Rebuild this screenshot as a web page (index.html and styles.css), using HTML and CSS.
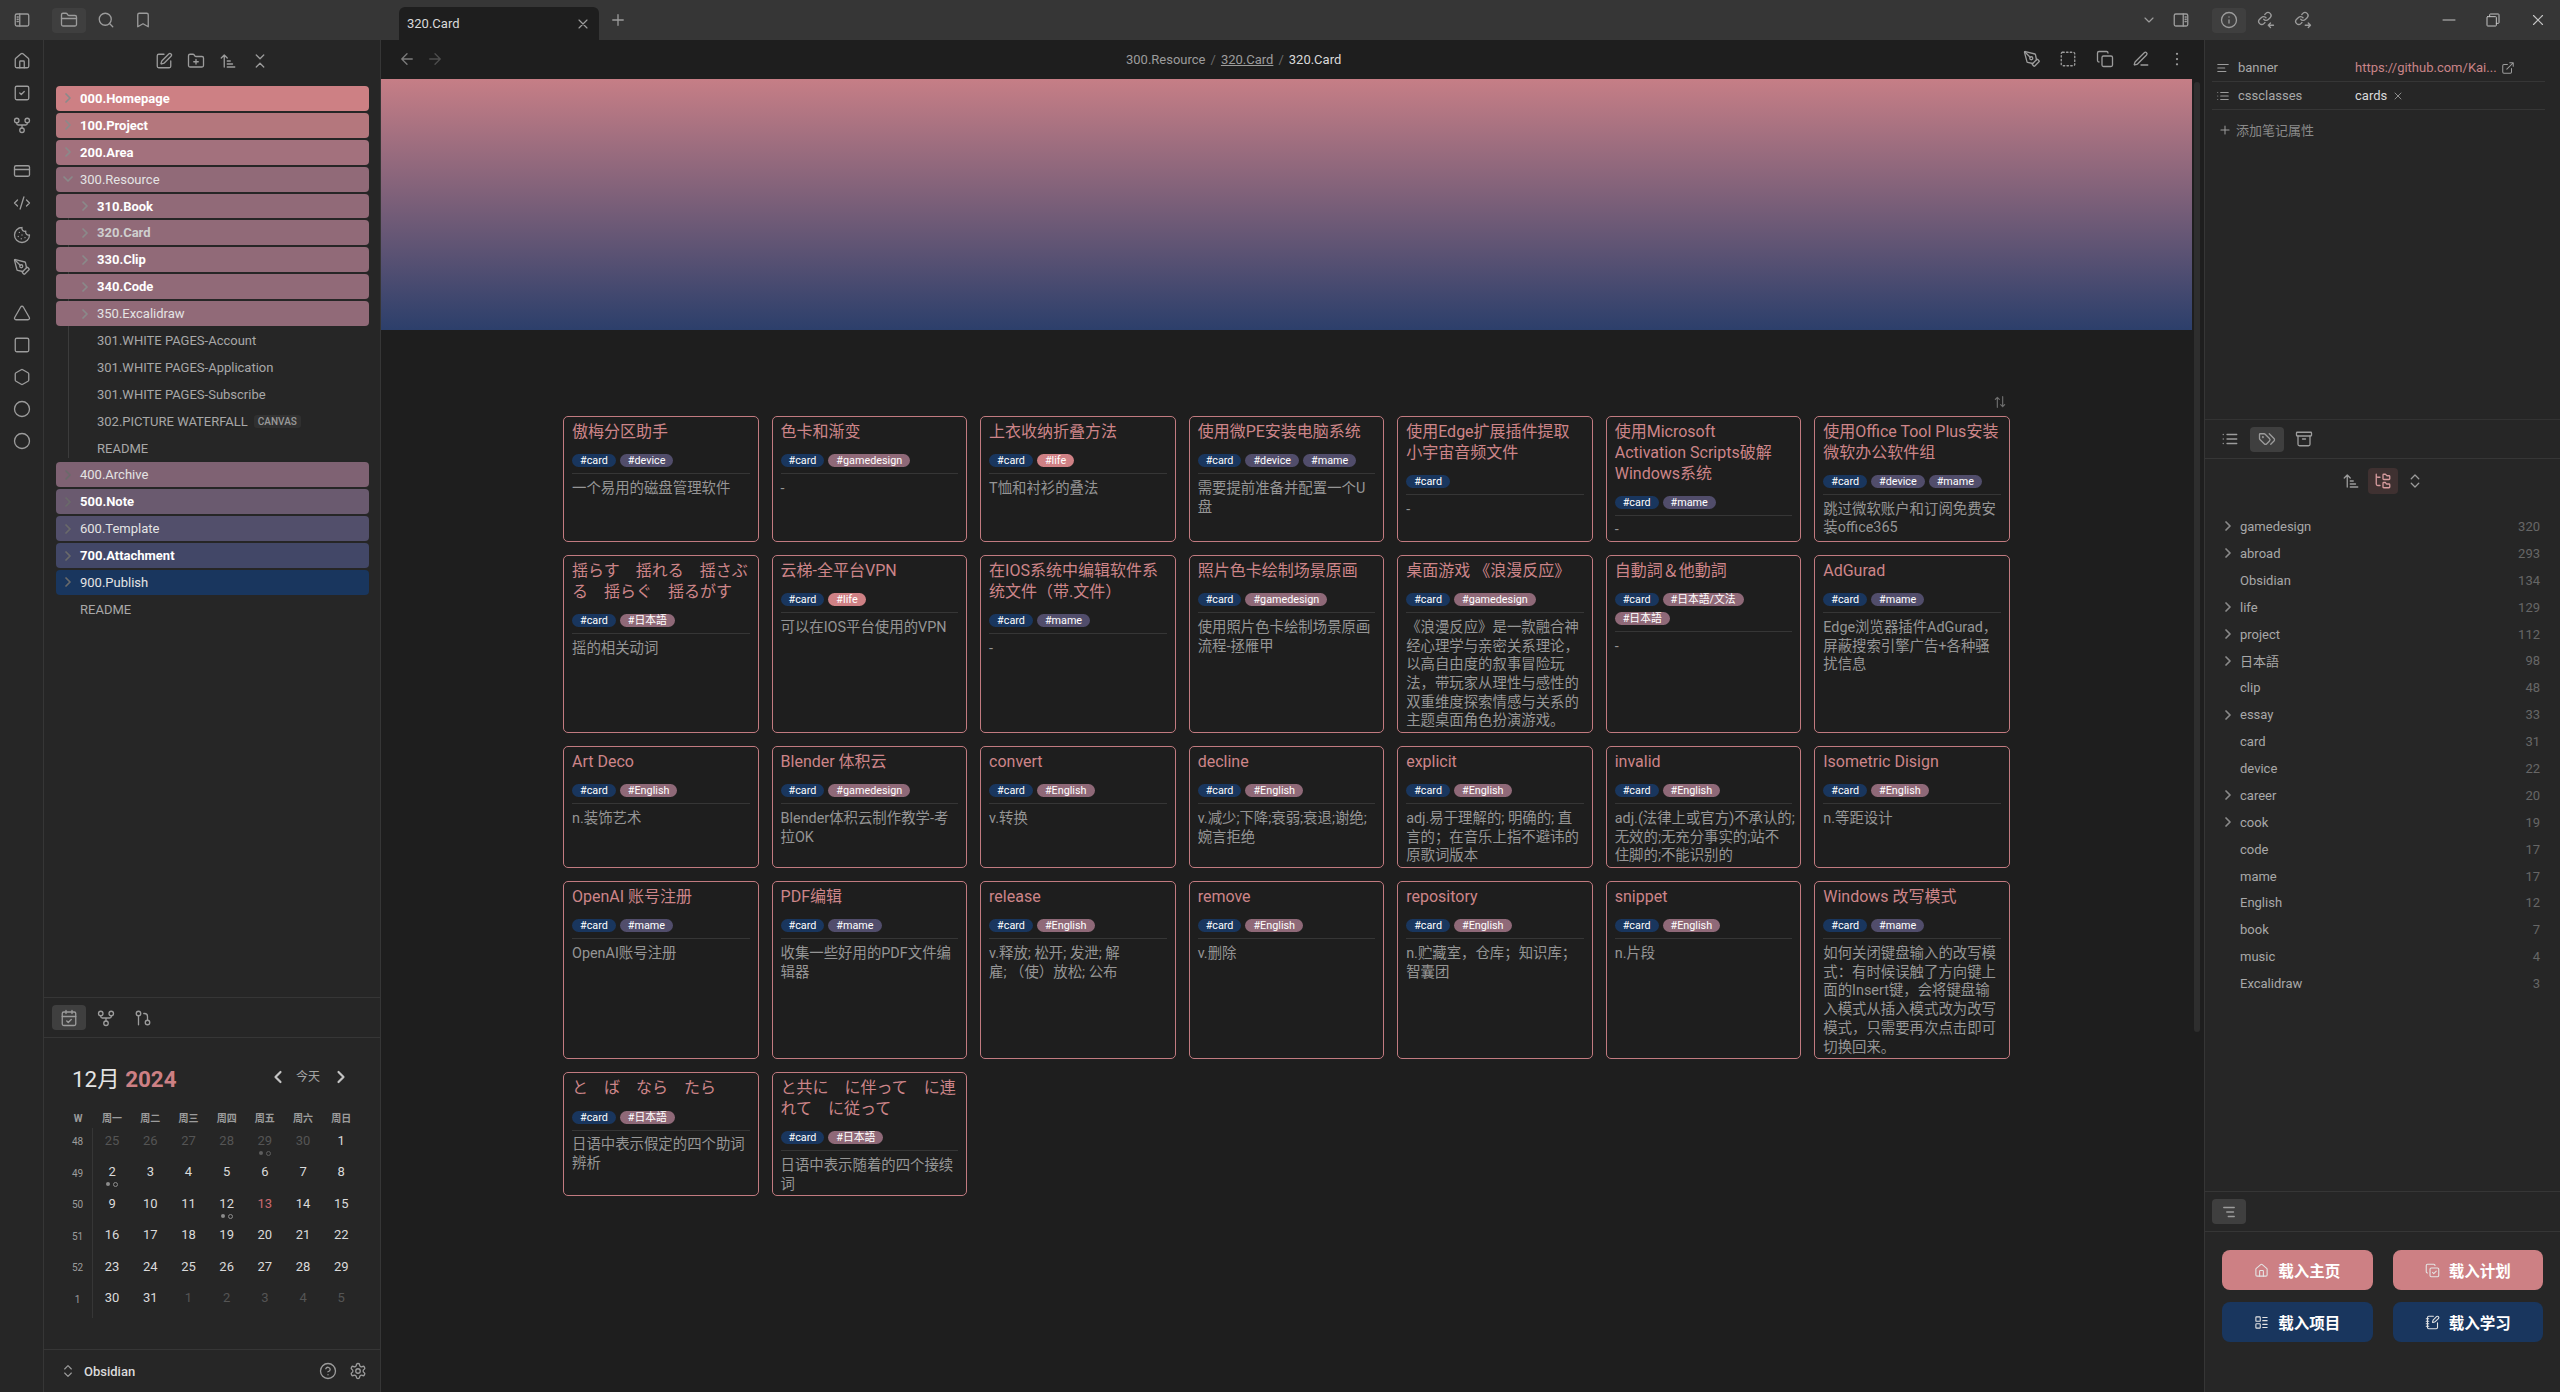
FILE: index.html
```html
<!DOCTYPE html>
<html lang="zh-CN">
  <head>
    <meta charset="UTF-8" />
    <title>320.Card - Obsidian</title>
    <link rel="stylesheet" href="styles.css">
  </head>
  <body>
    <svg class="defs" aria-hidden="true">
      <symbol id="i-sidebar-left" viewBox="0 0 24 24"><rect x="3" y="4" width="18" height="16" rx="2"/><path d="M9 4v16M5.5 8h1.5M5.5 11h1.5M5.5 14h1.5"/></symbol>
      <symbol id="i-sidebar-right" viewBox="0 0 24 24"><rect x="3" y="4" width="18" height="16" rx="2"/><path d="M15 4v16M17.5 8H19M17.5 11H19M17.5 14H19"/></symbol>
      <symbol id="i-folder" viewBox="0 0 24 24"><path d="M20 20a2 2 0 0 0 2-2V8a2 2 0 0 0-2-2h-7.9a2 2 0 0 1-1.69-.9L9.6 3.9A2 2 0 0 0 7.93 3H4a2 2 0 0 0-2 2v13a2 2 0 0 0 2 2Z"/><path d="M2 10h20"/></symbol>
      <symbol id="i-search" viewBox="0 0 24 24"><circle cx="11" cy="11" r="8"/><path d="m21 21-4.3-4.3"/></symbol>
      <symbol id="i-bookmark" viewBox="0 0 24 24"><path d="m19 21-7-4-7 4V5a2 2 0 0 1 2-2h10a2 2 0 0 1 2 2v16z"/></symbol>
      <symbol id="i-home" viewBox="0 0 24 24"><path d="M15 21v-8a1 1 0 0 0-1-1h-4a1 1 0 0 0-1 1v8"/><path d="M3 10a2 2 0 0 1 .709-1.528l7-5.999a2 2 0 0 1 2.582 0l7 5.999A2 2 0 0 1 21 10v9a2 2 0 0 1-2 2H5a2 2 0 0 1-2-2z"/></symbol>
      <symbol id="i-check-square" viewBox="0 0 24 24"><rect x="3" y="3" width="18" height="18" rx="2"/><path d="m9 12 2 2 4-4"/></symbol>
      <symbol id="i-fork" viewBox="0 0 24 24"><circle cx="12" cy="19" r="3"/><circle cx="5" cy="6" r="3"/><circle cx="19" cy="6" r="3"/><path d="M19 9v1c0 1-.6 2-2 2H7c-1.400 0-2-1-2-2V9M12 12v4"/></symbol>
      <symbol id="i-card" viewBox="0 0 24 24"><rect x="2" y="5" width="20" height="14" rx="2"/><path d="M2 10h20"/></symbol>
      <symbol id="i-code" viewBox="0 0 24 24"><path d="m18 16 4-4-4-4M6 8l-4 4 4 4M14.500 4l-5 16"/></symbol>
      <symbol id="i-cookie" viewBox="0 0 24 24"><path d="M12 2a10 10 0 1 0 10 10 4 4 0 0 1-5-5 4 4 0 0 1-5-5"/><path d="M8.500 8.500h.01M16 15.500h.01M12 12h.01M11 17h.01M7 14h.01"/></symbol>
      <symbol id="i-pen" viewBox="0 0 24 24"><path d="M15.707 21.293a1 1 0 0 1-1.414 0l-1.586-1.586a1 1 0 0 1 0-1.414l5.586-5.586a1 1 0 0 1 1.414 0l1.586 1.586a1 1 0 0 1 0 1.414z"/><path d="m18 13-1.375-6.874a1 1 0 0 0-.746-.776L3.235 2.028a1 1 0 0 0-1.207 1.207L5.350 15.879a1 1 0 0 0 .776.746L13 18"/><path d="m2.300 2.300 7.286 7.286"/><circle cx="11" cy="11" r="2"/></symbol>
      <symbol id="i-triangle" viewBox="0 0 24 24"><path d="m21.730 18-8-14a2 2 0 0 0-3.480 0l-8 14A2 2 0 0 0 4 21h16a2 2 0 0 0 1.730-3"/></symbol>
      <symbol id="i-square" viewBox="0 0 24 24"><rect x="3" y="3" width="18" height="18" rx="2"/></symbol>
      <symbol id="i-hexagon" viewBox="0 0 24 24"><path d="M21 16V8a2 2 0 0 0-1-1.730l-7-4a2 2 0 0 0-2 0l-7 4A2 2 0 0 0 3 8v8a2 2 0 0 0 1 1.730l7 4a2 2 0 0 0 2 0l7-4A2 2 0 0 0 21 16z"/></symbol>
      <symbol id="i-circle" viewBox="0 0 24 24"><circle cx="12" cy="12" r="10"/></symbol>
      <symbol id="i-edit" viewBox="0 0 24 24"><path d="M12 3H5a2 2 0 0 0-2 2v14a2 2 0 0 0 2 2h14a2 2 0 0 0 2-2v-7"/><path d="M18.375 2.625a1 1 0 0 1 3 3l-9.013 9.014a2 2 0 0 1-.853.505l-2.873.84a.5.5 0 0 1-.62-.62l.84-2.873a2 2 0 0 1 .506-.852z"/></symbol>
      <symbol id="i-folder-plus" viewBox="0 0 24 24"><path d="M12 10v6M9 13h6"/><path d="M20 20a2 2 0 0 0 2-2V8a2 2 0 0 0-2-2h-7.900a2 2 0 0 1-1.690-.9L9.600 3.900A2 2 0 0 0 7.930 3H4a2 2 0 0 0-2 2v13a2 2 0 0 0 2 2Z"/></symbol>
      <symbol id="i-sort" viewBox="0 0 24 24"><path d="m3 8 4-4 4 4M7 4v16M11 12h4M11 16h7M11 20h10"/></symbol>
      <symbol id="i-collapse" viewBox="0 0 24 24"><path d="m7 20 5-5 5 5M7 4l5 5 5-5"/></symbol>
      <symbol id="i-expand" viewBox="0 0 24 24"><path d="m7 15 5 5 5-5M7 9l5-5 5 5"/></symbol>
      <symbol id="i-calendar" viewBox="0 0 24 24"><path d="M8 2v4M16 2v4"/><rect x="3" y="4" width="18" height="18" rx="2"/><path d="M3 10h18M9 16l2 2 4-4"/></symbol>
      <symbol id="i-pull" viewBox="0 0 24 24"><circle cx="18" cy="18" r="3"/><circle cx="6" cy="6" r="3"/><path d="M13 6h1a4 4 0 0 1 4 4v5M6 9v12"/></symbol>
      <symbol id="i-help" viewBox="0 0 24 24"><circle cx="12" cy="12" r="10"/><path d="M9.090 9a3 3 0 0 1 5.830 1c0 2-3 3-3 3M12 17h.01"/></symbol>
      <symbol id="i-gear" viewBox="0 0 24 24"><path d="M12.220 2h-.44a2 2 0 0 0-2 2v.18a2 2 0 0 1-1 1.730l-.43.25a2 2 0 0 1-2 0l-.15-.08a2 2 0 0 0-2.730.73l-.22.38a2 2 0 0 0 .73 2.730l.15.1a2 2 0 0 1 1 1.720v.51a2 2 0 0 1-1 1.740l-.15.09a2 2 0 0 0-.73 2.730l.22.38a2 2 0 0 0 2.730.73l.15-.08a2 2 0 0 1 2 0l.43.25a2 2 0 0 1 1 1.730V20a2 2 0 0 0 2 2h.44a2 2 0 0 0 2-2v-.18a2 2 0 0 1 1-1.730l.43-.25a2 2 0 0 1 2 0l.15.08a2 2 0 0 0 2.730-.73l.22-.39a2 2 0 0 0-.73-2.730l-.15-.08a2 2 0 0 1-1-1.740v-.5a2 2 0 0 1 1-1.740l.15-.09a2 2 0 0 0 .73-2.730l-.22-.38a2 2 0 0 0-2.730-.73l-.15.08a2 2 0 0 1-2 0l-.43-.25a2 2 0 0 1-1-1.730V4a2 2 0 0 0-2-2z"/><circle cx="12" cy="12" r="3"/></symbol>
      <symbol id="i-x" viewBox="0 0 24 24"><path d="M18 6 6 18M6 6l12 12"/></symbol>
      <symbol id="i-plus" viewBox="0 0 24 24"><path d="M5 12h14M12 5v14"/></symbol>
      <symbol id="i-arrow-left" viewBox="0 0 24 24"><path d="m12 19-7-7 7-7M19 12H5"/></symbol>
      <symbol id="i-arrow-right" viewBox="0 0 24 24"><path d="m12 5 7 7-7 7M5 12h14"/></symbol>
      <symbol id="i-chevron-down" viewBox="0 0 24 24"><path d="m6 9 6 6 6-6"/></symbol>
      <symbol id="i-chevron-right" viewBox="0 0 24 24"><path d="m9 18 6-6-6-6"/></symbol>
      <symbol id="i-chevron-left" viewBox="0 0 24 24"><path d="m15 18-6-6 6-6"/></symbol>
      <symbol id="i-dashed" viewBox="0 0 24 24"><rect x="3" y="3" width="18" height="18" rx="2" stroke-dasharray="2 3"/></symbol>
      <symbol id="i-copy" viewBox="0 0 24 24"><rect x="8" y="8" width="14" height="14" rx="2"/><path d="M4 16c-1.100 0-2-.9-2-2V4c0-1.100.9-2 2-2h10c1.100 0 2 .9 2 2"/></symbol>
      <symbol id="i-pencil" viewBox="0 0 24 24"><path d="M12 20h9"/><path d="M16.376 3.622a1 1 0 0 1 3.002 3.002L7.368 18.635a2 2 0 0 1-.855.506l-2.872.838a.5.5 0 0 1-.62-.62l.838-2.872a2 2 0 0 1 .506-.854z"/></symbol>
      <symbol id="i-more" viewBox="0 0 24 24"><path d="M12 5h.01M12 12h.01M12 19h.01" stroke-width="3"/></symbol>
      <symbol id="i-info" viewBox="0 0 24 24"><circle cx="12" cy="12" r="10"/><path d="M12 16v-4M12 8h.01"/></symbol>
      <symbol id="i-link-in" viewBox="0 0 24 24"><path d="M9 11a4 4 0 0 0 6 .4l2.500-2.500a4 4 0 0 0-5.700-5.700l-1.400 1.400"/><path d="M12 9a4 4 0 0 0-6-.4l-2.500 2.500a4 4 0 0 0 5.700 5.700l1.400-1.400"/><path d="M22 19h-7M18 16l-3 3 3 3"/></symbol>
      <symbol id="i-link-out" viewBox="0 0 24 24"><path d="M9 11a4 4 0 0 0 6 .4l2.500-2.500a4 4 0 0 0-5.700-5.700l-1.400 1.400"/><path d="M12 9a4 4 0 0 0-6-.4l-2.500 2.500a4 4 0 0 0 5.700 5.700l1.400-1.400"/><path d="M15 19h7M19 16l3 3-3 3"/></symbol>
      <symbol id="i-minimize" viewBox="0 0 24 24"><path d="M3 12h18"/></symbol>
      <symbol id="i-restore" viewBox="0 0 24 24"><rect x="3" y="7" width="14" height="14" rx="1"/><path d="M7 7V4a1 1 0 0 1 1-1h12a1 1 0 0 1 1 1v12a1 1 0 0 1-1 1h-3"/></symbol>
      <symbol id="i-text" viewBox="0 0 24 24"><path d="M21 6H3M15 12H3M17 18H3"/></symbol>
      <symbol id="i-list" viewBox="0 0 24 24"><path d="M3 6h.01M3 12h.01M3 18h.01M8 6h13M8 12h13M8 18h13"/></symbol>
      <symbol id="i-external" viewBox="0 0 24 24"><path d="M15 3h6v6M10 14 21 3"/><path d="M18 13v6a2 2 0 0 1-2 2H5a2 2 0 0 1-2-2V8a2 2 0 0 1 2-2h6"/></symbol>
      <symbol id="i-tags" viewBox="0 0 24 24"><path d="m15 5 6.300 6.300a2.400 2.400 0 0 1 0 3.400L17 19"/><path d="M9.586 5.586A2 2 0 0 0 8.172 5H3a1 1 0 0 0-1 1v5.172a2 2 0 0 0 .586 1.414L8.290 18.290a2.426 2.426 0 0 0 3.420 0l3.580-3.580a2.426 2.426 0 0 0 0-3.420z"/><circle cx="6.500" cy="9.500" r=".5"/></symbol>
      <symbol id="i-archive" viewBox="0 0 24 24"><rect x="2" y="3" width="20" height="5" rx="1"/><path d="M4 8v11a2 2 0 0 0 2 2h12a2 2 0 0 0 2-2V8M10 12h4"/></symbol>
      <symbol id="i-tree" viewBox="0 0 24 24"><path d="M20 10a1 1 0 0 0 1-1V6a1 1 0 0 0-1-1h-2.500a1 1 0 0 1-.8-.4l-.9-1.200A1 1 0 0 0 15 3h-2a1 1 0 0 0-1 1v5a1 1 0 0 0 1 1Z"/><path d="M20 21a1 1 0 0 0 1-1v-3a1 1 0 0 0-1-1h-2.900a1 1 0 0 1-.88-.55l-.42-.85a1 1 0 0 0-.92-.6H13a1 1 0 0 0-1 1v5a1 1 0 0 0 1 1Z"/><path d="M3 5a2 2 0 0 0 2 2h3M3 3v13a2 2 0 0 0 2 2h3"/></symbol>
      <symbol id="i-outline" viewBox="0 0 24 24"><path d="M5 6h14M9 12h9M11 18h8"/></symbol>
      <symbol id="i-copy-check" viewBox="0 0 24 24"><path d="m12 15 2 2 4-4"/><rect x="8" y="8" width="14" height="14" rx="2"/><path d="M4 16c-1.100 0-2-.9-2-2V4c0-1.100.9-2 2-2h10c1.100 0 2 .9 2 2"/></symbol>
      <symbol id="i-layout-list" viewBox="0 0 24 24"><rect x="3" y="3" width="7" height="7" rx="1"/><rect x="3" y="14" width="7" height="7" rx="1"/><path d="M14 4h7M14 9h7M14 15h7M14 20h7"/></symbol>
      <symbol id="i-notebook" viewBox="0 0 24 24"><path d="M13.400 2H6a2 2 0 0 0-2 2v16a2 2 0 0 0 2 2h12a2 2 0 0 0 2-2v-7.400"/><path d="M2 6h4M2 10h4M2 14h4M2 18h4"/><path d="M21.378 5.626a1 1 0 1 0-3.004-3.004l-5.010 5.012a2 2 0 0 0-.506.854l-.837 2.870a.5.5 0 0 0 .62.62l2.870-.837a2 2 0 0 0 .854-.506z"/></symbol>
    </svg>

    <div id="app">
      <div class="title-bar">
        <div class="tb-left">
          <div class="ribbon-toggle"><svg class="ico"><use href="#i-sidebar-left"/></svg></div>
          <div class="tab-group">
            <div class="tab-btn active"><svg class="ico"><use href="#i-folder"/></svg></div>
            <div class="tab-btn"><svg class="ico"><use href="#i-search"/></svg></div>
            <div class="tab-btn"><svg class="ico"><use href="#i-bookmark"/></svg></div>
          </div>
        </div>
        <div class="tb-center">
          <div class="doc-tab">
            <span>320.Card</span>
            <svg class="ico small"><use href="#i-x"/></svg>
          </div>
          <svg class="ico new-tab"><use href="#i-plus"/></svg>
          <div class="tb-tools">
            <svg class="ico small"><use href="#i-chevron-down"/></svg>
            <svg class="ico"><use href="#i-sidebar-right"/></svg>
          </div>
        </div>
        <div class="tb-right">
          <div class="tab-group">
            <div class="tab-btn active"><svg class="ico"><use href="#i-info"/></svg></div>
            <div class="tab-btn"><svg class="ico"><use href="#i-link-in"/></svg></div>
            <div class="tab-btn"><svg class="ico"><use href="#i-link-out"/></svg></div>
          </div>
          <div class="win-ctrls">
            <svg class="ico small"><use href="#i-minimize"/></svg>
            <svg class="ico small"><use href="#i-restore"/></svg>
            <svg class="ico"><use href="#i-x"/></svg>
          </div>
        </div>
      </div>

      <div class="workspace">
        <div class="ribbon">
          <svg class="ico"><use href="#i-home"/></svg>
          <svg class="ico"><use href="#i-check-square"/></svg>
          <svg class="ico"><use href="#i-fork"/></svg>
          <svg class="ico group-start"><use href="#i-card"/></svg>
          <svg class="ico"><use href="#i-code"/></svg>
          <svg class="ico"><use href="#i-cookie"/></svg>
          <svg class="ico"><use href="#i-pen"/></svg>
          <svg class="ico group-start"><use href="#i-triangle"/></svg>
          <svg class="ico"><use href="#i-square"/></svg>
          <svg class="ico"><use href="#i-hexagon"/></svg>
          <svg class="ico"><use href="#i-circle"/></svg>
          <svg class="ico"><use href="#i-circle"/></svg>
        </div>

        <div class="side-left">
          <div class="file-pane">
            <div class="pane-nav">
              <svg class="ico"><use href="#i-edit"/></svg>
              <svg class="ico"><use href="#i-folder-plus"/></svg>
              <svg class="ico"><use href="#i-sort"/></svg>
              <svg class="ico"><use href="#i-collapse"/></svg>
            </div>
            <div class="tree">
              <div class="row c0 strong"><svg class="chev"><use href="#i-chevron-right"/></svg>000.Homepage</div>
              <div class="row c1 strong"><svg class="chev"><use href="#i-chevron-right"/></svg>100.Project</div>
              <div class="row c2 strong"><svg class="chev"><use href="#i-chevron-right"/></svg>200.Area</div>
              <div class="row c3"><svg class="chev"><use href="#i-chevron-down"/></svg>300.Resource</div>
              <div class="children">
                <div class="row c3 strong"><svg class="chev"><use href="#i-chevron-right"/></svg>310.Book</div>
                <div class="row c3 strong current"><svg class="chev"><use href="#i-chevron-right"/></svg>320.Card</div>
                <div class="row c3 strong"><svg class="chev"><use href="#i-chevron-right"/></svg>330.Clip</div>
                <div class="row c3 strong"><svg class="chev"><use href="#i-chevron-right"/></svg>340.Code</div>
                <div class="row c3"><svg class="chev"><use href="#i-chevron-right"/></svg>350.Excalidraw</div>
                <div class="row file">301.WHITE PAGES-Account</div>
                <div class="row file">301.WHITE PAGES-Application</div>
                <div class="row file">301.WHITE PAGES-Subscribe</div>
                <div class="row file">302.PICTURE WATERFALL<span class="badge">CANVAS</span></div>
                <div class="row file">README</div>
              </div>
              <div class="row c4"><svg class="chev"><use href="#i-chevron-right"/></svg>400.Archive</div>
              <div class="row c5 strong"><svg class="chev"><use href="#i-chevron-right"/></svg>500.Note</div>
              <div class="row c6"><svg class="chev"><use href="#i-chevron-right"/></svg>600.Template</div>
              <div class="row c7 strong"><svg class="chev"><use href="#i-chevron-right"/></svg>700.Attachment</div>
              <div class="row c8"><svg class="chev"><use href="#i-chevron-right"/></svg>900.Publish</div>
              <div class="row file top">README</div>
            </div>
          </div>

          <div class="cal-tabs">
            <div class="tab-group">
              <div class="tab-btn active"><svg class="ico"><use href="#i-calendar"/></svg></div>
              <div class="tab-btn"><svg class="ico"><use href="#i-fork"/></svg></div>
              <div class="tab-btn"><svg class="ico"><use href="#i-pull"/></svg></div>
            </div>
          </div>

          <div class="calendar">
            <div class="cal-head">
              <div class="cal-title">12月 <b>2024</b></div>
              <div class="cal-nav">
                <svg class="ico"><use href="#i-chevron-left"/></svg>
                <span>今天</span>
                <svg class="ico"><use href="#i-chevron-right"/></svg>
              </div>
            </div>
            <div class="cal-grid">
              <div class="hd">W</div><div class="hd">周一</div><div class="hd">周二</div><div class="hd">周三</div><div class="hd">周四</div><div class="hd">周五</div><div class="hd">周六</div><div class="hd">周日</div>
              <div class="wk">48</div><div class="day out">25</div><div class="day out">26</div><div class="day out">27</div><div class="day out">28</div><div class="day out">29<i class="dots"><i></i><i></i></i></div><div class="day out">30</div><div class="day">1</div>
              <div class="wk">49</div><div class="day">2<i class="dots"><i></i><i></i></i></div><div class="day">3</div><div class="day">4</div><div class="day">5</div><div class="day">6</div><div class="day">7</div><div class="day">8</div>
              <div class="wk">50</div><div class="day">9</div><div class="day">10</div><div class="day">11</div><div class="day">12<i class="dots"><i></i><i></i></i></div><div class="day today">13</div><div class="day">14</div><div class="day">15</div>
              <div class="wk">51</div><div class="day">16</div><div class="day">17</div><div class="day">18</div><div class="day">19</div><div class="day">20</div><div class="day">21</div><div class="day">22</div>
              <div class="wk">52</div><div class="day">23</div><div class="day">24</div><div class="day">25</div><div class="day">26</div><div class="day">27</div><div class="day">28</div><div class="day">29</div>
              <div class="wk">1</div><div class="day">30</div><div class="day">31</div><div class="day out">1</div><div class="day out">2</div><div class="day out">3</div><div class="day out">4</div><div class="day out">5</div>
            </div>
          </div>

          <div class="vault">
            <svg class="ico small"><use href="#i-expand"/></svg>
            <span class="vault-name">Obsidian</span>
            <svg class="ico"><use href="#i-help"/></svg>
            <svg class="ico"><use href="#i-gear"/></svg>
          </div>
        </div>

        <div class="main">
          <div class="nav-bar">
            <div class="nav-arrows">
              <svg class="ico"><use href="#i-arrow-left"/></svg>
              <svg class="ico dim"><use href="#i-arrow-right"/></svg>
            </div>
            <div class="crumbs">300.Resource<i>/</i><u>320.Card</u><i>/</i><b>320.Card</b></div>
            <div class="nav-actions">
              <svg class="ico"><use href="#i-pen"/></svg>
              <svg class="ico"><use href="#i-dashed"/></svg>
              <svg class="ico"><use href="#i-copy"/></svg>
              <svg class="ico"><use href="#i-pencil"/></svg>
              <svg class="ico"><use href="#i-more"/></svg>
            </div>
          </div>

          <div class="note">
            <div class="banner"></div>
            <div class="note-body">
              <div class="sort-row"><svg class="ico sort" viewBox="0 0 24 24"><path d="M8 20V5M5 8l3-3 3 3M16 4v15M13 16l3 3 3-3"/></svg></div>
              <div class="cards">
                <div class="card"><h4>傲梅分区助手</h4><div class="tags"><span class="t-card">#card</span><span class="t-device">#device</span></div><p>一个易用的磁盘管理软件</p></div>
                <div class="card"><h4>色卡和渐变</h4><div class="tags"><span class="t-card">#card</span><span class="t-game">#gamedesign</span></div><p>-</p></div>
                <div class="card"><h4>上衣收纳折叠方法</h4><div class="tags"><span class="t-card">#card</span><span class="t-life">#life</span></div><p>T恤和衬衫的叠法</p></div>
                <div class="card"><h4>使用微PE安装电脑系统</h4><div class="tags"><span class="t-card">#card</span><span class="t-device">#device</span><span class="t-device">#mame</span></div><p>需要提前准备并配置一个U盘</p></div>
                <div class="card"><h4>使用Edge扩展插件提取小宇宙音频文件</h4><div class="tags"><span class="t-card">#card</span></div><p>-</p></div>
                <div class="card"><h4>使用Microsoft<br>Activation Scripts破解<br>Windows系统</h4><div class="tags"><span class="t-card">#card</span><span class="t-device">#mame</span></div><p>-</p></div>
                <div class="card"><h4>使用Office Tool Plus安装微软办公软件组</h4><div class="tags"><span class="t-card">#card</span><span class="t-device">#device</span><span class="t-device">#mame</span></div><p>跳过微软账户和订阅免费安装office365</p></div>

                <div class="card"><h4>揺らす　揺れる　揺さぶる　揺らぐ　揺るがす</h4><div class="tags"><span class="t-card">#card</span><span class="t-game">#日本語</span></div><p>摇的相关动词</p></div>
                <div class="card"><h4>云梯-全平台VPN</h4><div class="tags"><span class="t-card">#card</span><span class="t-life">#life</span></div><p>可以在IOS平台使用的VPN</p></div>
                <div class="card"><h4>在IOS系统中编辑软件系统文件（带.文件）</h4><div class="tags"><span class="t-card">#card</span><span class="t-device">#mame</span></div><p>-</p></div>
                <div class="card"><h4>照片色卡绘制场景原画</h4><div class="tags"><span class="t-card">#card</span><span class="t-game">#gamedesign</span></div><p>使用照片色卡绘制场景原画流程-拯雁甲</p></div>
                <div class="card"><h4>桌面游戏 《浪漫反应》</h4><div class="tags"><span class="t-card">#card</span><span class="t-game">#gamedesign</span></div><p>《浪漫反应》是一款融合神经心理学与亲密关系理论，以高自由度的叙事冒险玩法，带玩家从理性与感性的双重维度探索情感与关系的主题桌面角色扮演游戏。</p></div>
                <div class="card"><h4>自動詞＆他動詞</h4><div class="tags"><span class="t-card">#card</span><span class="t-game">#日本語/文法</span><span class="t-game">#日本語</span></div><p>-</p></div>
                <div class="card"><h4>AdGurad</h4><div class="tags"><span class="t-card">#card</span><span class="t-device">#mame</span></div><p>Edge浏览器插件AdGurad，屏蔽搜索引擎广告+各种骚扰信息</p></div>

                <div class="card"><h4>Art Deco</h4><div class="tags"><span class="t-card">#card</span><span class="t-game">#English</span></div><p>n.装饰艺术</p></div>
                <div class="card"><h4>Blender 体积云</h4><div class="tags"><span class="t-card">#card</span><span class="t-game">#gamedesign</span></div><p>Blender体积云制作教学-考拉OK</p></div>
                <div class="card"><h4>convert</h4><div class="tags"><span class="t-card">#card</span><span class="t-game">#English</span></div><p>v.转换</p></div>
                <div class="card"><h4>decline</h4><div class="tags"><span class="t-card">#card</span><span class="t-game">#English</span></div><p>v.减少;下降;衰弱;衰退;谢绝;婉言拒绝</p></div>
                <div class="card"><h4>explicit</h4><div class="tags"><span class="t-card">#card</span><span class="t-game">#English</span></div><p>adj.易于理解的; 明确的; 直言的；在音乐上指不避讳的原歌词版本</p></div>
                <div class="card"><h4>invalid</h4><div class="tags"><span class="t-card">#card</span><span class="t-game">#English</span></div><p><span class="nowrap">adj.(法律上或官方)不承认的;</span><br>无效的;无充分事实的;站不住脚的;不能识别的</p></div>
                <div class="card"><h4>Isometric Disign</h4><div class="tags"><span class="t-card">#card</span><span class="t-game">#English</span></div><p>n.等距设计</p></div>

                <div class="card"><h4>OpenAI 账号注册</h4><div class="tags"><span class="t-card">#card</span><span class="t-device">#mame</span></div><p>OpenAI账号注册</p></div>
                <div class="card"><h4>PDF编辑</h4><div class="tags"><span class="t-card">#card</span><span class="t-device">#mame</span></div><p>收集一些好用的PDF文件编辑器</p></div>
                <div class="card"><h4>release</h4><div class="tags"><span class="t-card">#card</span><span class="t-game">#English</span></div><p>v.释放; 松开; 发泄; 解<br>雇; （使）放松; 公布</p></div>
                <div class="card"><h4>remove</h4><div class="tags"><span class="t-card">#card</span><span class="t-game">#English</span></div><p>v.删除</p></div>
                <div class="card"><h4>repository</h4><div class="tags"><span class="t-card">#card</span><span class="t-game">#English</span></div><p>n.贮藏室，仓库；知识库；智囊团</p></div>
                <div class="card"><h4>snippet</h4><div class="tags"><span class="t-card">#card</span><span class="t-game">#English</span></div><p>n.片段</p></div>
                <div class="card"><h4>Windows 改写模式</h4><div class="tags"><span class="t-card">#card</span><span class="t-device">#mame</span></div><p>如何关闭键盘输入的改写模式：有时候误触了方向键上面的Insert键，会将键盘输入模式从插入模式改为改写模式，只需要再次点击即可切换回来。</p></div>

                <div class="card"><h4>と　ば　なら　たら</h4><div class="tags"><span class="t-card">#card</span><span class="t-game">#日本語</span></div><p>日语中表示假定的四个助词辨析</p></div>
                <div class="card"><h4>と共に　に伴って　に連れて　に従って</h4><div class="tags"><span class="t-card">#card</span><span class="t-game">#日本語</span></div><p>日语中表示随着的四个接续词</p></div>
              </div>
            </div>
            <div class="scroll-thumb"></div>
          </div>
        </div>

        <div class="side-right">
          <div class="props">
            <div class="prop"><svg class="ico tiny"><use href="#i-text"/></svg><span class="prop-key">banner</span><span class="prop-link">https://github.com/Kai...</span><svg class="ico tiny"><use href="#i-external"/></svg></div>
            <div class="prop"><svg class="ico tiny"><use href="#i-list"/></svg><span class="prop-key">cssclasses</span><span class="prop-val">cards</span><svg class="ico mini"><use href="#i-x"/></svg></div>
            <div class="prop-add"><svg class="ico tiny"><use href="#i-plus"/></svg>添加笔记属性</div>
          </div>

          <div class="tag-pane">
            <div class="tag-tabs">
              <div class="tab-group">
                <div class="tab-btn"><svg class="ico"><use href="#i-list"/></svg></div>
                <div class="tab-btn active"><svg class="ico"><use href="#i-tags"/></svg></div>
                <div class="tab-btn"><svg class="ico"><use href="#i-archive"/></svg></div>
              </div>
            </div>
            <div class="pane-nav tag-nav">
              <div class="nav-btn"><svg class="ico"><use href="#i-sort"/></svg></div>
              <div class="nav-btn on"><svg class="ico"><use href="#i-tree"/></svg></div>
              <div class="nav-btn"><svg class="ico"><use href="#i-expand"/></svg></div>
            </div>
            <div class="tag-list">
              <div class="tag-row"><svg class="chev"><use href="#i-chevron-right"/></svg><span>gamedesign</span><em>320</em></div>
              <div class="tag-row"><svg class="chev"><use href="#i-chevron-right"/></svg><span>abroad</span><em>293</em></div>
              <div class="tag-row leaf"><span>Obsidian</span><em>134</em></div>
              <div class="tag-row"><svg class="chev"><use href="#i-chevron-right"/></svg><span>life</span><em>129</em></div>
              <div class="tag-row"><svg class="chev"><use href="#i-chevron-right"/></svg><span>project</span><em>112</em></div>
              <div class="tag-row"><svg class="chev"><use href="#i-chevron-right"/></svg><span>日本語</span><em>98</em></div>
              <div class="tag-row leaf"><span>clip</span><em>48</em></div>
              <div class="tag-row"><svg class="chev"><use href="#i-chevron-right"/></svg><span>essay</span><em>33</em></div>
              <div class="tag-row leaf"><span>card</span><em>31</em></div>
              <div class="tag-row leaf"><span>device</span><em>22</em></div>
              <div class="tag-row"><svg class="chev"><use href="#i-chevron-right"/></svg><span>career</span><em>20</em></div>
              <div class="tag-row"><svg class="chev"><use href="#i-chevron-right"/></svg><span>cook</span><em>19</em></div>
              <div class="tag-row leaf"><span>code</span><em>17</em></div>
              <div class="tag-row leaf"><span>mame</span><em>17</em></div>
              <div class="tag-row leaf"><span>English</span><em>12</em></div>
              <div class="tag-row leaf"><span>book</span><em>7</em></div>
              <div class="tag-row leaf"><span>music</span><em>4</em></div>
              <div class="tag-row leaf"><span>Excalidraw</span><em>3</em></div>
            </div>
          </div>

          <div class="outline-tabs">
            <div class="tab-btn active"><svg class="ico"><use href="#i-outline"/></svg></div>
          </div>

          <div class="load-btns">
            <div class="load pink"><svg class="ico"><use href="#i-home"/></svg>载入主页</div>
            <div class="load pink"><svg class="ico"><use href="#i-copy-check"/></svg>载入计划</div>
            <div class="load navy"><svg class="ico"><use href="#i-layout-list"/></svg>载入项目</div>
            <div class="load navy"><svg class="ico"><use href="#i-notebook"/></svg>载入学习</div>
          </div>
        </div>
      </div>
    </div>
  </body>
</html>
```

FILE: styles.css
```css
* {
  box-sizing: border-box;
  margin: 0;
  padding: 0;
}

html,
body {
  width: 2560px;
  height: 1392px;
  overflow: hidden;
  background-color: #1e1e1e;
  color: #dadada;
  font-family: "Roboto", "Noto Sans CJK SC", sans-serif;
  font-size: 13px;
}

.defs {
  display: none;
}

#app {
  height: 100%;
  display: flex;
  flex-direction: column;
}

.ico {
  width: 18px;
  height: 18px;
  flex: none;
  fill: none;
  stroke: #9c9c9c;
  stroke-width: 1.75;
  stroke-linecap: round;
  stroke-linejoin: round;
}

.ico.small {
  width: 16px;
  height: 16px;
}

.ico.tiny {
  width: 14px;
  height: 14px;
}

.ico.mini {
  width: 12px;
  height: 12px;
}

.chev {
  width: 16px;
  height: 16px;
  margin: 0 -2px;
  flex: none;
  fill: none;
  stroke: #8a8a8a;
  stroke-width: 2.6;
  stroke-linecap: round;
  stroke-linejoin: round;
}

/* title bar */

.title-bar {
  height: 40px;
  flex: none;
  display: flex;
  background-color: #363636;
}

.tb-left {
  width: 381px;
  display: flex;
  align-items: center;
}

.ribbon-toggle {
  width: 44px;
  display: flex;
  justify-content: center;
}

.tab-group {
  display: flex;
  gap: 3px;
  padding-left: 8px;
}

.tab-btn {
  width: 34px;
  height: 25px;
  border-radius: 4px;
  display: flex;
  align-items: center;
  justify-content: center;
}

.tab-btn.active {
  background-color: #3f3f3f;
}

.tb-center {
  flex: 1;
  display: flex;
  align-items: center;
  padding-left: 18px;
}

.doc-tab {
  width: 200px;
  height: 33px;
  margin-top: 7px;
  padding: 0 8px;
  display: flex;
  align-items: center;
  justify-content: space-between;
  background-color: #1e1e1e;
  border-radius: 6px 6px 0 0;
  font-size: 13px;
}

.new-tab {
  margin-left: 10px;
}

.tb-tools {
  margin-left: auto;
  padding-right: 14px;
  display: flex;
  align-items: center;
  gap: 15px;
}

.tb-right {
  width: 356px;
  display: flex;
  align-items: center;
  justify-content: space-between;
}

.tb-right .tab-group {
  padding-left: 8px;
}

.win-ctrls {
  display: flex;
  align-items: center;
  gap: 28px;
  padding-right: 13px;
}

.win-ctrls .ico {
  stroke: #c4c4c4;
  stroke-width: 1.5;
}

/* panes */

.workspace {
  flex: 1;
  min-height: 0;
  display: flex;
}

.ribbon {
  width: 44px;
  flex: none;
  padding-top: 12px;
  display: flex;
  flex-direction: column;
  align-items: center;
  gap: 14px;
  background-color: #262626;
  border-right: 1px solid #363636;
}

.ribbon .group-start {
  margin-top: 14px;
}

.side-left {
  width: 337px;
  flex: none;
  display: flex;
  flex-direction: column;
  background-color: #262626;
  border-right: 1px solid #363636;
}

.file-pane {
  height: 957px;
  flex: none;
}

.pane-nav {
  height: 42px;
  display: flex;
  align-items: center;
  justify-content: center;
  gap: 14px;
}

.tree {
  padding: 4px 11px 0 12px;
}

.row {
  height: 24.9px;
  margin-bottom: 2px;
  padding-left: 6px;
  display: flex;
  align-items: center;
  gap: 6px;
  border-radius: 4px;
  color: #e4e4e4;
  font-size: 13px;
  white-space: nowrap;
}

.row.strong {
  color: #fff;
  font-weight: 700;
}

.row.current {
  color: #cfcfcf;
}

.row.file {
  padding-left: 41px;
  color: #a8a8a8;
}

.row.file.top {
  padding-left: 24px;
}

.children {
  position: relative;
}

.children::before {
  content: "";
  position: absolute;
  left: 12px;
  top: 0;
  bottom: 2px;
  width: 1px;
  background-color: #3c3c3c;
}

.children .row {
  position: relative;
}

.children .row:not(.file) {
  padding-left: 23px;
}

.badge {
  padding: 0 4px;
  height: 13px;
  line-height: 13px;
  border-radius: 3px;
  background-color: #303030;
  color: #999;
  font-size: 10px;
  font-weight: 500;
}

.c0 { background-color: #cd8084; }
.c1 { background-color: #b4777d; }
.c2 { background-color: #a3717d; }
.c3 { background-color: #916a78; }
.c4 { background-color: #7f6273; }
.c5 { background-color: #6a5a6f; }
.c6 { background-color: #524f6b; }
.c7 { background-color: #424767; }
.c8 { background-color: #19365e; }

.c6 .chev,
.c7 .chev,
.c8 .chev,
.c5 .chev,
.c4 .chev {
  stroke: #6a6a6a;
}

.cal-tabs {
  height: 41px;
  flex: none;
  display: flex;
  align-items: center;
  border-top: 1px solid #363636;
  border-bottom: 1px solid #363636;
}

.calendar {
  flex: 1;
  padding: 23px 0 0 19px;
}

.cal-head {
  height: 32px;
  display: flex;
  align-items: center;
  justify-content: space-between;
  margin-bottom: 16px;
  padding: 0 29px 0 9px;
}

.cal-title {
  font-size: 22.4px;
  color: #e4e4e4;
}

.cal-title b {
  color: #cd8084;
  font-weight: 700;
}

.cal-nav {
  display: flex;
  align-items: center;
  color: #a4a4a4;
  font-size: 12px;
}

.cal-nav .ico {
  width: 20px;
  height: 20px;
  stroke: #c4c4c4;
  stroke-width: 2.6;
}

.cal-nav span {
  margin: 0 11px 4px 8px;
}

.cal-grid {
  display: grid;
  grid-template-columns: 30px repeat(7, 38.2px);
  grid-template-rows: 19px repeat(6, 31.6px);
}

.hd {
  text-align: center;
  color: #9c9c9c;
  font-size: 10px;
  font-weight: 700;
  line-height: 19px;
}

.wk {
  padding-top: 5px;
  text-align: center;
  color: #9c9c9c;
  font-size: 10px;
  line-height: 18px;
  border-right: 1px solid #363636;
}

.day {
  padding-top: 3.5px;
  display: flex;
  flex-direction: column;
  align-items: center;
  color: #dadada;
  font-size: 13px;
  line-height: 18px;
}

.day.out {
  color: #555;
}

.day.today {
  color: #cd6a70;
}

.dots {
  display: flex;
  gap: 3px;
  margin-top: 1px;
}

.dots i {
  width: 4px;
  height: 4px;
  border-radius: 50%;
  background-color: #8c8c8c;
}

.dots i + i {
  width: 5px;
  height: 5px;
  background: none;
  border: 1px solid #8c8c8c;
}

.day.out .dots i {
  background-color: #5e5e5e;
}

.day.out .dots i + i {
  background: none;
  border-color: #5e5e5e;
}

.vault {
  height: 43px;
  flex: none;
  padding: 0 13px 0 16px;
  display: flex;
  align-items: center;
  gap: 8px;
  border-top: 1px solid #363636;
}

.vault-name {
  flex: 1;
  color: #dadada;
  font-size: 13px;
  font-weight: 500;
}

.vault .ico:last-child {
  margin-left: 4px;
}

/* main */

.main {
  flex: 1;
  min-width: 0;
  display: flex;
  flex-direction: column;
}

.nav-bar {
  height: 39px;
  flex: none;
  padding: 0 18px 1px 17px;
  display: flex;
  align-items: center;
  justify-content: space-between;
}

.nav-arrows {
  display: flex;
  gap: 10px;
}

.nav-arrows .ico {
  stroke: #7c7c7c;
}

.nav-arrows .ico.dim {
  stroke: #4e4e4e;
}

.crumbs {
  color: #9c9c9c;
  font-size: 13px;
}

.crumbs i {
  margin: 0 5px;
  font-style: normal;
  color: #6a6a6a;
}

.crumbs b {
  color: #dadada;
  font-weight: 400;
}

.nav-actions {
  display: flex;
  gap: 18.2px;
}

.note {
  position: relative;
  flex: 1;
  min-height: 0;
  padding-right: 12px;
}

.banner {
  height: 251px;
  background: linear-gradient(#c67e86, #2c3f6b);
}

.note-body {
  width: 1447px;
  margin: 0 auto;
  padding-top: 64px;
}

.sort-row {
  height: 15px;
  margin-bottom: 7px;
  display: flex;
  justify-content: flex-end;
  padding-right: 2px;
}

.ico.sort {
  width: 16px;
  height: 16px;
  stroke: #6e6e6e;
}

.cards {
  display: grid;
  grid-template-columns: repeat(7, 1fr);
  gap: 12.8px;
}

.card {
  padding: 5px 8px 1.2px;
  border: 1px solid #c27b80;
  border-radius: 5px;
  min-width: 0;
}

.card h4 {
  margin-bottom: 11.5px;
  color: #cd8589;
  font-size: 16px;
  font-weight: 400;
  line-height: 20.8px;
}

.tags {
  display: flex;
  flex-wrap: wrap;
  gap: 6px 4px;
  padding-bottom: 6px;
  border-bottom: 1px solid #363636;
  margin-bottom: 5.5px;
}

.tags span {
  height: 13px;
  padding: 0 8px;
  border-radius: 6.5px;
  color: #fff;
  font-size: 10.8px;
  line-height: 13px;
}

.t-card { background-color: #19365e; }
.t-device { background-color: #514d6b; }
.t-game { background-color: #8f6978; }
.t-life { background-color: #cf8185; }

.card p {
  color: #959595;
  font-size: 14.4px;
  line-height: 18.72px;
}

.nowrap {
  white-space: nowrap;
}

.scroll-thumb {
  position: absolute;
  top: 3px;
  right: 4px;
  width: 6px;
  height: 950px;
  border-radius: 3px;
  background-color: #2e2e2e;
}

/* right sidebar */

.side-right {
  width: 356px;
  flex: none;
  display: flex;
  flex-direction: column;
  background-color: #262626;
  border-left: 1px solid #363636;
}

.props {
  height: 380px;
  flex: none;
  padding: 14px 15px 0 7px;
  border-bottom: 1px solid #333;
}

.prop {
  height: 28px;
  padding-left: 4px;
  display: flex;
  align-items: center;
  border-bottom: 1px solid #363636;
}

.prop-key {
  width: 125px;
  padding-left: 8px;
  color: #a8a8a8;
  font-size: 13px;
  flex: none;
}

.prop-link {
  color: #c98488;
  font-size: 13px;
  margin-right: 4px;
}

.prop-val {
  color: #dadada;
  font-size: 13px;
  margin-right: 5px;
}

.prop-add {
  margin: 10px 0 0 6px;
  display: flex;
  align-items: center;
  gap: 4px;
  color: #8a8a8a;
  font-size: 13px;
}

.tag-pane {
  flex: 1;
  min-height: 0;
}

.tag-tabs {
  height: 39px;
  display: flex;
  align-items: center;
  border-bottom: 1px solid #363636;
}

.tag-nav {
  height: 44px;
  gap: 2px;
}

.nav-btn {
  width: 30px;
  height: 26px;
  border-radius: 4px;
  display: flex;
  align-items: center;
  justify-content: center;
}

.nav-btn.on {
  background-color: #3f3131;
}

.nav-btn.on .ico {
  stroke: #d59a9d;
}

.tag-list {
  padding-top: 10px;
}

.tag-row {
  height: 26.9px;
  padding: 0 20px 0 17px;
  display: flex;
  align-items: center;
  gap: 6px;
  color: #a8a8a8;
  font-size: 13px;
}

.tag-row.leaf {
  padding-left: 35px;
}

.tag-row span {
  flex: 1;
}

.tag-row em {
  font-style: normal;
  color: #666;
  font-size: 13px;
}

.outline-tabs {
  height: 41px;
  flex: none;
  padding-left: 7px;
  display: flex;
  align-items: center;
  border-top: 1px solid #363636;
  border-bottom: 1px solid #363636;
}

.load-btns {
  height: 160px;
  flex: none;
  padding: 18px 17px 0;
  display: grid;
  grid-template-columns: 1fr 1fr;
  grid-template-rows: 40px 40px;
  gap: 12px 20px;
}

.load {
  display: flex;
  align-items: center;
  justify-content: center;
  gap: 9px;
  border-radius: 8px;
  color: #fff;
  font-size: 15.5px;
  font-weight: 700;
}

.load .ico {
  width: 15px;
  height: 15px;
  stroke: #e4e4e4;
}

.load.pink { background-color: #cd8084; }
.load.navy { background-color: #19365e; }
```
